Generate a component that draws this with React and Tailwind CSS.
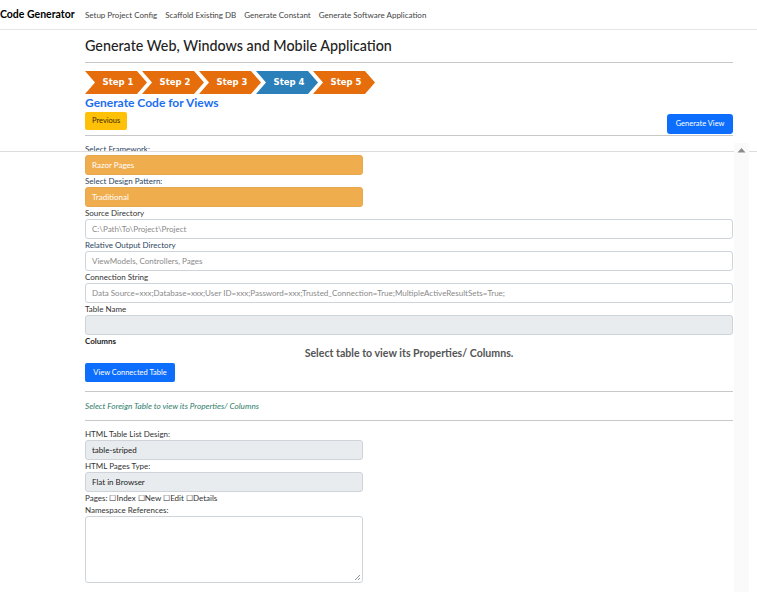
import React from "react";

const steps = [
  { n: 1, active: false },
  { n: 2, active: false },
  { n: 3, active: false },
  { n: 4, active: true },
  { n: 5, active: false },
];

const Label = ({ children, className = "" }) => (
  <div className={`h-[12px] text-[8px] leading-[12px] ${className}`}>{children}</div>
);

const TextInput = ({ placeholder, disabled }) => (
  <div
    className={`h-[20px] whitespace-nowrap rounded-[3px] border border-[#ced4da] px-[6px] text-[8px] leading-[18px] text-[#8a8a8a] ${
      disabled ? "bg-[#e9ecef]" : "bg-white"
    }`}
  >
    {placeholder}
  </div>
);

export default function App() {
  return (
    <div
      className="relative h-[592px] w-[757px] overflow-hidden bg-white text-[#212529]"
      style={{ fontFamily: '"Lato", "Open Sans", sans-serif' }}
    >
      {/* navbar */}
      <div className="flex h-[30px] items-center gap-[8px] border-b border-[#e5e5e5]">
        <span className="w-[77px] shrink-0 whitespace-nowrap text-[10.5px] font-bold text-black">Code Generator</span>
        <span className="text-[8px] text-[#444]">Setup Project Config</span>
        <span className="text-[8px] text-[#444]">Scaffold Existing DB</span>
        <span className="text-[8px] text-[#444]">Generate Constant</span>
        <span className="text-[8px] text-[#444]">Generate Software Application</span>
      </div>

      <div className="ml-[85px] w-[648px]">
        <h1 className="mt-[6px] h-[20px] text-[14.3px] font-medium leading-[20px] text-[#222]">
          Generate Web, Windows and Mobile Application
        </h1>
        <div className="mt-[6px] border-t border-[#c8c8c8]" />

        {/* steps */}
        <div className="mt-[8px] flex h-[23px]">
          {steps.map((s, i) => (
            <div
              key={s.n}
              className={`flex h-[23px] w-[62px] items-center justify-center pl-[4px] text-[8.5px] font-bold text-white [clip-path:polygon(0_0,calc(100%-10px)_0,100%_50%,calc(100%-10px)_100%,0_100%,10px_50%)] ${
                s.active ? "bg-[#2b80b9]" : "bg-[#e56d0c]"
              } ${i > 0 ? "-ml-[5px]" : ""}`}
              style={{ fontFamily: '"DejaVu Sans", Verdana, sans-serif' }}
            >
              Step {s.n}
            </div>
          ))}
        </div>

        <div className="mt-[1px] h-[15px] text-[12px] font-bold leading-[15px] text-[#1a6ef0]">
          Generate Code for Views
        </div>

        <div className="mt-[2px] flex h-[22px] justify-between">
          <div className="flex h-[18px] items-center rounded-[2px] bg-[#ffc107] px-[7px] text-[7.5px] text-[#3a2a00]">
            Previous
          </div>
          <div className="mt-[2px] flex h-[20px] items-center rounded-[3px] bg-[#0d6efd] px-[8.5px] text-[7.5px] text-white">
            Generate View
          </div>
        </div>
        <div className="mt-[1px] border-t border-[#c8c8c8]" />

        <div className="mt-[7px]">
          <Label className="text-[#2c4563]">Select Framework:</Label>
          <div className="h-[20px] w-[278px] rounded-[3px] border border-[#e6a94f] bg-[#f0ad4e] px-[6px] text-[8px] leading-[18px] text-white">
            Razor Pages
          </div>
          <Label className="text-[#2c4563]">Select Design Pattern:</Label>
          <div className="h-[20px] w-[278px] rounded-[3px] border border-[#e6a94f] bg-[#f0ad4e] px-[6px] text-[8px] leading-[18px] text-white">
            Traditional
          </div>
          <Label className="text-[#333]">Source Directory</Label>
          <TextInput placeholder="C:\Path\To\Project\Project" />
          <Label className="text-[#2c4563]">Relative Output Directory</Label>
          <TextInput placeholder="ViewModels, Controllers, Pages" />
          <Label className="text-[#333]">Connection String</Label>
          <TextInput placeholder="Data Source=xxx;Database=xxx;User ID=xxx;Password=xxx;Trusted_Connection=True;MultipleActiveResultSets=True;" />
          <Label className="text-[#333]">Table Name</Label>
          <TextInput placeholder="" disabled />
          <Label className="font-bold text-[#222]">Columns</Label>
          <div className="h-[12px] text-center text-[10.6px] font-bold leading-[12px] text-[#555]">
            Select table to view its Properties/ Columns.
          </div>
          <div className="mt-[4px] flex h-[19px] w-[90px] items-center justify-center rounded-[2px] bg-[#0d6efd] text-[7.5px] text-white">
            View Connected Table
          </div>
          <div className="mt-[9px] border-t border-[#c8c8c8]" />
          <div className="mt-[9px] h-[10px] text-[8.2px] italic leading-[10px] text-[#2f7d6b]">
            Select Foreign Table to view its Properties/ Columns
          </div>
          <div className="mt-[9px] border-t border-[#c8c8c8]" />

          <div className="mt-[7px] w-[278px]">
            <Label className="text-[#333]">HTML Table List Design:</Label>
            <div className="h-[20px] rounded-[3px] border border-[#ced4da] bg-[#e9ecef] px-[6px] text-[8px] leading-[18px] text-[#222]">
              table-striped
            </div>
            <Label className="text-[#333]">HTML Pages Type:</Label>
            <div className="h-[20px] rounded-[3px] border border-[#ced4da] bg-[#e9ecef] px-[6px] text-[8px] leading-[18px] text-[#222]">
              Flat in Browser
            </div>
            <Label className="text-[#333]">Pages: ☐Index ☐New ☐Edit ☐Details</Label>
            <Label className="text-[#333]">Namespace References:</Label>
            <div className="relative h-[67px] rounded-[3px] border border-[#ced4da] bg-white">
              <svg className="absolute bottom-[2px] right-[2px]" width="6" height="6" viewBox="0 0 6 6">
                <path d="M6 1L1 6M6 4L4 6" stroke="#777" strokeWidth="0.8" />
              </svg>
            </div>
          </div>
        </div>
      </div>

      {/* overlay line + scrollbar */}
      <div className="absolute left-0 right-0 top-[151px] border-t border-[#dddddd]" />
      <div className="absolute bottom-0 left-[734px] top-[143px] w-[15px] bg-[#fafafa]">
        <svg className="absolute left-[3px] top-[4px]" width="9" height="6" viewBox="0 0 9 6">
          <path d="M0.5 5.5L4.5 1L8.5 5.5Z" fill="#8a8a8a" />
        </svg>
      </div>
    </div>
  );
}
